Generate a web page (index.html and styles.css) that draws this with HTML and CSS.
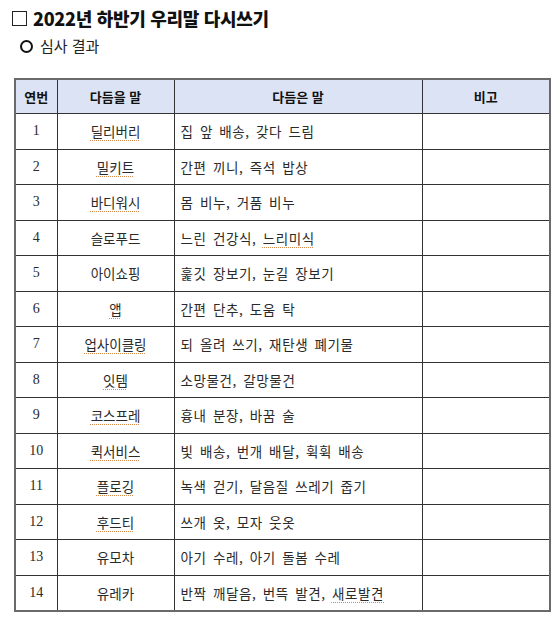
FILE: index.html
```html
<!DOCTYPE html>
<html lang="ko">
<head>
<meta charset="utf-8">
<link rel="stylesheet" href="styles.css">
</head>
<body>
<div class="page">
  <h1 class="title"><span class="box"></span>2022년 하반기 우리말 다시쓰기</h1>
  <p class="sub"><span class="circle"></span>심사 결과</p>
  <table class="grid">
    <colgroup>
      <col class="c1"><col class="c2"><col class="c3"><col class="c4">
    </colgroup>
    <thead>
      <tr><th>연번</th><th>다듬을 말</th><th>다듬은 말</th><th>비고</th></tr>
    </thead>
    <tbody>
      <tr><td class="num">1</td><td class="word"><span class="sp">딜리버리</span></td><td class="mean">집 앞 배송, 갖다 드림</td><td></td></tr>
      <tr><td class="num">2</td><td class="word"><span class="sp">밀키트</span></td><td class="mean">간편 끼니, 즉석 밥상</td><td></td></tr>
      <tr><td class="num">3</td><td class="word"><span class="sp">바디워시</span></td><td class="mean">몸 비누, 거품 비누</td><td></td></tr>
      <tr><td class="num">4</td><td class="word">슬로푸드</td><td class="mean">느린 건강식, <span class="sp">느리미식</span></td><td></td></tr>
      <tr><td class="num">5</td><td class="word">아이쇼핑</td><td class="mean">훑깃 장보기, 눈길 장보기</td><td></td></tr>
      <tr><td class="num">6</td><td class="word"><span class="sp">앱</span></td><td class="mean">간편 단추, 도움 탁</td><td></td></tr>
      <tr><td class="num">7</td><td class="word"><span class="sp">업사이클링</span></td><td class="mean">되 올려 쓰기, 재탄생 폐기물</td><td></td></tr>
      <tr><td class="num">8</td><td class="word"><span class="sp">잇템</span></td><td class="mean">소망물건, 갈망물건</td><td></td></tr>
      <tr><td class="num">9</td><td class="word"><span class="sp">코스프레</span></td><td class="mean">흉내 분장, 바꿈 술</td><td></td></tr>
      <tr><td class="num">10</td><td class="word"><span class="sp">퀵서비스</span></td><td class="mean">빛 배송, 번개 배달, 휙휙 배송</td><td></td></tr>
      <tr><td class="num">11</td><td class="word"><span class="sp">플로깅</span></td><td class="mean">녹색 걷기, 달음질 쓰레기 줍기</td><td></td></tr>
      <tr><td class="num">12</td><td class="word"><span class="sp">후드티</span></td><td class="mean">쓰개 옷, 모자 웃옷</td><td></td></tr>
      <tr><td class="num">13</td><td class="word">유모차</td><td class="mean">아기 수레, 아기 돌봄 수레</td><td></td></tr>
      <tr><td class="num">14</td><td class="word">유레카</td><td class="mean">반짝 깨달음, 번뜩 발견, <span class="sp">새로발견</span></td><td></td></tr>
    </tbody>
  </table>
</div>
</body>
</html>
```

FILE: styles.css
```css
html, body {
  margin: 0;
  padding: 0;
  background: #ffffff;
}
body {
  font-family: "Noto Sans CJK KR", "Noto Sans", sans-serif;
  color: #222;
}
.page {
  padding: 6px 0 0 14px;
  width: 535px;
}
.title {
  margin: 0;
  display: flex;
  align-items: center;
  gap: 6px;
  font-size: 18px;
  line-height: 24px;
  font-weight: 900;
  color: #111;
  letter-spacing: -0.3px;
  margin-left: -2px;
}
.box {
  width: 13px;
  height: 13px;
  border: 1.5px solid #222;
  display: inline-block;
  flex: none;
}
.sub {
  margin: 6px 0 0 6px;
  display: flex;
  align-items: center;
  gap: 7px;
  font-size: 15px;
  line-height: 20px;
  color: #222;
}
.circle {
  width: 9px;
  height: 9px;
  border: 2px solid #111;
  border-radius: 50%;
  display: inline-block;
  flex: none;
}
.grid {
  margin-top: 22px;
  border-collapse: collapse;
  width: 535px;
  table-layout: fixed;
  border: 2px solid #6a6a6a;
  font-size: 13.5px;
}
.c1 { width: 42px; }
.c2 { width: 117px; }
.c3 { width: 248px; }
.c4 { width: 128px; }
.grid th, .grid td {
  border: 1px solid #333;
  padding: 0;
}
.grid th {
  background: #dce3f4;
  height: 33px;
  font-weight: 700;
  font-size: 13px;
  color: #111;
  text-align: center;
}
.grid td {
  height: 34.5px;
  color: #2a2a2a;
}
.num {
  text-align: center;
  font-family: "Liberation Serif", "DejaVu Serif", serif;
  font-size: 14px;
}
.word {
  text-align: center;
}
.mean {
  text-align: left;
  padding-left: 6px !important;
  letter-spacing: 0.6px;
  word-spacing: 2px;
}
.sp {
  text-decoration: underline dotted #d88a4a;
  text-decoration-thickness: 1px;
  text-underline-offset: 3px;
}
```
